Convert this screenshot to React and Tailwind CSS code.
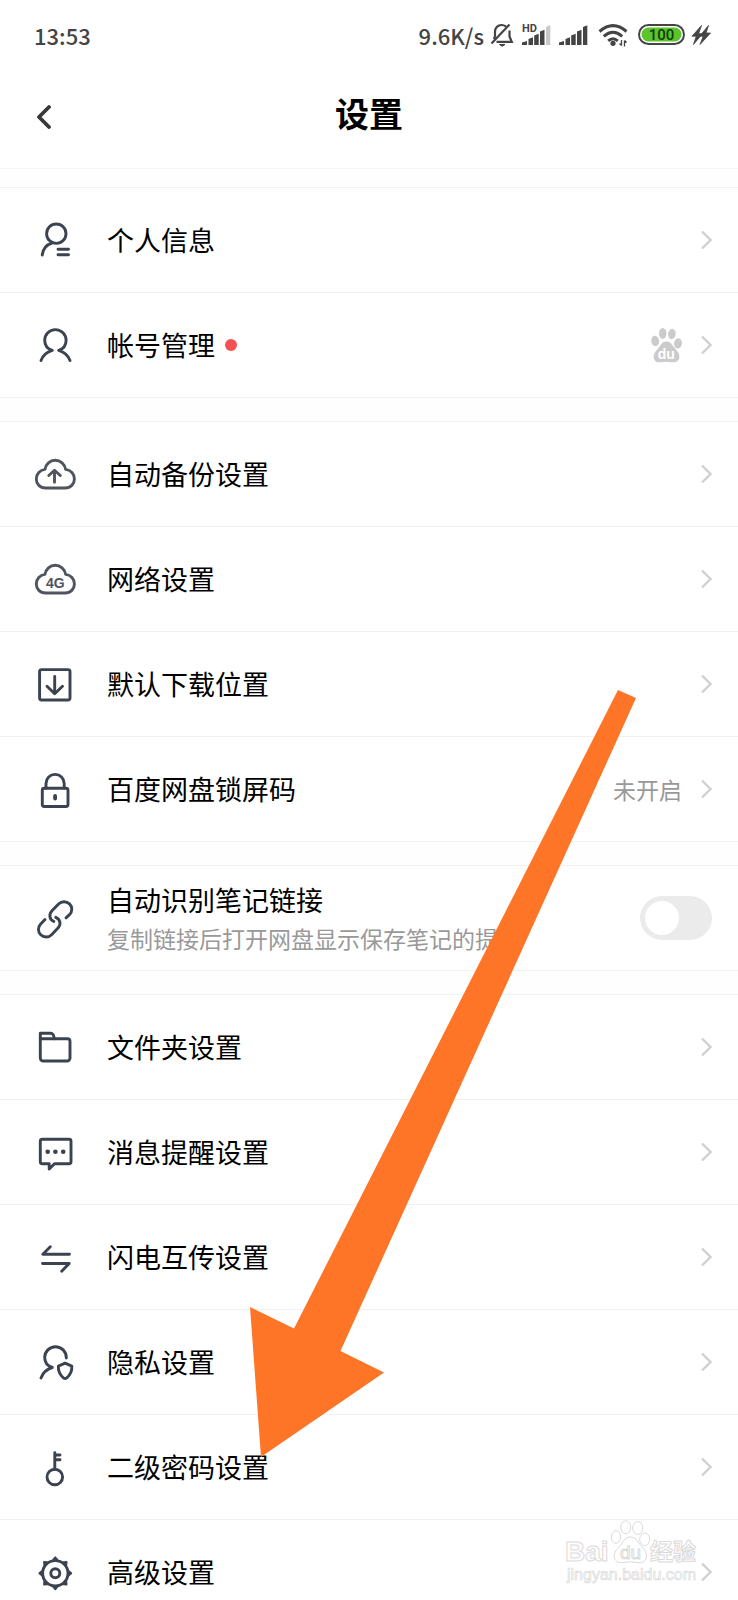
import React from "react";

const fontStack = "font-['Noto_Sans_CJK_SC','Noto_Sans',sans-serif]";

function Icon({ children, className = "text-[#3c4350]" }) {
  return (
    <svg
      viewBox="0 0 42 42"
      className={`size-[42px] shrink-0 ${className}`}
      fill="none"
      stroke="currentColor"
      strokeWidth="2.9"
      strokeLinecap="round"
      strokeLinejoin="round"
      aria-hidden="true"
    >
      {children}
    </svg>
  );
}

const cloud =
  "M11.5 35C6 35 2.3 31 2.3 26C2.3 21 6 17 11 16.4C11.8 11 16 7.3 21.2 7.3S30.8 11 31.6 16.4C36.8 17 40.4 21 40.4 26C40.4 31 36.6 35 31.2 35Z";

const icons = {
  profile: (
    <Icon>
      <circle cx="22.3" cy="14.7" r="9.7" />
      <path d="M18.3 23.8C12.5 25.6 8.8 30 8.2 36" />
      <path d="M24 30.3H34.5M24 35.7H34.5" />
    </Icon>
  ),
  account: (
    <Icon>
      <path d="M7 36.6C8.8 31.6 12.6 28 18.3 26.4C13.6 25 10.7 21 10.7 16.3a10.7 10.7 0 0 1 21.4 0C32.1 21 29.2 25 24.6 26.4C30.2 28 34.2 31.6 36 36.6" />
    </Icon>
  ),
  backup: (
    <Icon className="text-[#50545f]">
      <path d={cloud} />
      <path d="M20.5 29.3V17.5M14.8 22.5L20.5 17.2L26.3 22.5" />
    </Icon>
  ),
  network: (
    <Icon className="text-[#50545f]">
      <path d={cloud} />
      <text
        x="21.3"
        y="29.8"
        textAnchor="middle"
        fill="currentColor"
        stroke="none"
        className="font-['Liberation_Sans',sans-serif] text-[14px] font-bold"
      >
        4G
      </text>
    </Icon>
  ),
  download: (
    <Icon>
      <rect x="5.6" y="6.6" width="30.4" height="30.4" rx="2" />
      <path d="M20.7 13.5V30.5M13 23.3L20.7 30.8L28.5 23.3" />
    </Icon>
  ),
  lock: (
    <Icon>
      <rect x="8.3" y="20.3" width="25.7" height="18.2" rx="2" />
      <path d="M12 20V15.5a9.1 9.1 0 0 1 18.2 0V20" />
      <path d="M21.1 28V30.5" strokeWidth="3.8" />
    </Icon>
  ),
  link: (
    <Icon>
      <path d="M19.8 24.4c-4.5-1.9-5.2-7-1.8-10.6l6.6-6.8c3-3 7.8-3.1 10.9-.1s3 7.7 0 10.8L32 20.8" />
      <path d="M11 22.6L6.7 27c-3 3.1-3 7.9 0 10.8s7.9 3 10.9-.1l6.4-6.6c3.3-3.5 2.4-8.8-2.2-10.8" />
    </Icon>
  ),
  folder: (
    <Icon>
      <path d="M6.3 12.7V7.3H16.8C18.8 7.3 19.8 9 20.4 12.7" />
      <path d="M6.3 12.7H33.5a2.5 2.5 0 0 1 2.5 2.5V32a3 3 0 0 1-3 3H9.3a3 3 0 0 1-3-3Z" />
    </Icon>
  ),
  message: (
    <Icon>
      <path d="M8.3 8.3H35a2 2 0 0 1 2 2V30.7a2 2 0 0 1-2 2H20.5L15.2 38V32.7H8.3a2 2 0 0 1-2-2V10.3a2 2 0 0 1 2-2Z" />
      <g fill="currentColor" stroke="none">
        <circle cx="13.7" cy="20.7" r="2.3" />
        <circle cx="21.4" cy="20.7" r="2.3" />
        <circle cx="29.2" cy="20.7" r="2.3" />
      </g>
    </Icon>
  ),
  transfer: (
    <Icon>
      <path d="M35.5 18.3H8.8L16.3 10.7" />
      <path d="M8.5 27.5H35.2L27.7 35.2" />
    </Icon>
  ),
  privacy: (
    <Icon>
      <path d="M7 37C8.8 32 12.6 28.2 18.3 26.5C13.6 25 10.7 21 10.7 16.5a10.8 10.8 0 0 1 21.6 0v.6" />
      <path d="M31.1 22.2l6.7 2.9c.4 5.1-1.9 9.2-5.3 12q-1.4 1-2.8 0c-3.4-2.8-5.7-6.9-5.3-12Z" />
    </Icon>
  ),
  key: (
    <Icon>
      <circle cx="20.8" cy="31" r="7.8" />
      <path d="M20.8 23V6.8M20.8 9H26M20.8 13.7H26" />
    </Icon>
  ),
  gear: (
    <Icon>
      <circle cx="21.3" cy="22.3" r="12.7" />
      <circle cx="21.3" cy="22.3" r="4.5" />
      {[0, 45, 90, 135, 180, 225, 270, 315].map((a) => (
        <path
          key={a}
          d="M19.3 8.7L21.3 6.3L23.3 8.7Z"
          fill="currentColor"
          strokeWidth="1.8"
          transform={`rotate(${a} 21.3 22.3)`}
        />
      ))}
    </Icon>
  ),
};

function Chevron() {
  return (
    <svg viewBox="0 0 12 21" className="h-[21px] w-3 shrink-0" fill="none" stroke="#d0d0d0" strokeWidth="2.3" aria-hidden="true">
      <path d="M2 1.5L10.5 10L2 18.5" />
    </svg>
  );
}

function Paw() {
  return (
    <svg viewBox="0 0 32 36" className="h-9 w-8 shrink-0" fill="#cbcbcb" role="img" aria-label="du">
      <ellipse cx="5.2" cy="14" rx="3.9" ry="5.2" transform="rotate(-8 5.2 14)" />
      <ellipse cx="12.7" cy="6.4" rx="3.7" ry="5.4" />
      <ellipse cx="21.9" cy="7" rx="3.8" ry="5.2" transform="rotate(10 21.9 7)" />
      <ellipse cx="28" cy="16.4" rx="3.9" ry="5.2" transform="rotate(8 28 16.4)" />
      <path d="M16.3 14.5C21 14.5 22 18 25 21.5C28 25 29.7 27 29.3 30.5C28.7 34.5 25.5 35.5 22.5 35.2C18 34.5 14.5 34.5 10.5 35.2C7 35.5 4.2 34.5 3.7 30.5C3.3 27 5 25 8 21.5C11 18 12 14.5 16.3 14.5Z" />
      <text x="16.2" y="31.6" textAnchor="middle" fill="#fff" className="font-['Liberation_Sans',sans-serif] text-[14px] font-bold">
        du
      </text>
    </svg>
  );
}

function Row({ icon, label, dot, extra }) {
  return (
    <li className="border-t border-[#f1f1f1]">
      <a href="#" className="flex h-26 items-center pr-[26px] pl-[34px]">
        {icons[icon]}
        <span className="ml-[31px] text-[27px] leading-10 text-black">{label}</span>
        {dot && <span className="ml-[10px] size-3 rounded-full bg-[#f25252]" />}
        <span className="ml-auto flex items-center gap-[18px]">
          {extra}
          <Chevron />
        </span>
      </a>
    </li>
  );
}

function Section({ children }) {
  return <ul className="mb-[23px] border-b border-[#f1f1f1] bg-white">{children}</ul>;
}

function Bars({ last = "#444" }) {
  return (
    <>
      <path fill="#444" d="M0 22v-2.5l5-1.5v4zM6.5 22v-6l4.5-1.8v7.8zM12.2 22v-9.5l4.5-1.8v11.3zM18 22v-13.5l4.5-1.8v15.3z" />
      <path fill={last} d="M24 22v-18l4.3-1.8v19.8z" />
    </>
  );
}

function StatusBar() {
  return (
    <div className="flex h-[70px] items-center pr-[27px] pl-[34px] text-[22px] leading-8 font-medium text-[#444]">
      <time>13:53</time>
      <span className="ml-auto">9.6K/s</span>
      <svg viewBox="0 0 24 24" className="ml-[6px] size-6" fill="none" stroke="#444" strokeWidth="2.2" aria-hidden="true">
        <path d="M19.5 1.5L1.5 20.5" />
        <path d="M16.2 3.6C10.5-.2 5 3.5 5 9V13.5L3.8 16M19.5 7.5V13.5L21.8 18.9H6.5" />
        <path d="M9.5 21.5H15L12.2 23.3Z" fill="#444" strokeWidth="1" />
      </svg>
      <svg viewBox="0 0 29 24" className="ml-2 h-6 w-[29px] overflow-visible" aria-hidden="true">
        <Bars last="#c9c9c9" />
        <rect x="0" y="0" width="16" height="11" fill="#fff" />
        <text x="0" y="9" fill="#444" className="font-[Roboto,sans-serif] text-[11px] font-bold">
          HD
        </text>
      </svg>
      <svg viewBox="0 0 29 24" className="ml-2 h-6 w-[29px]" aria-hidden="true">
        <Bars />
      </svg>
      <svg viewBox="0 0 30 24" className="ml-[10px] h-6 w-[30px]" fill="none" stroke="#444" strokeWidth="3" aria-hidden="true">
        <path d="M1.5 8.5Q15-3.3 28.5 8.5M5.8 13.3Q15 5.2 24.2 13.3M10.2 17.8Q15 13.6 19.8 17.8" />
        <circle cx="15" cy="20.3" r="2.6" fill="#444" stroke="none" />
        <path d="M23.5 17V22.5M26.5 17.5V23.5M21.5 20.5L23.5 22.5M28.5 19.5L26.5 17.5" strokeWidth="1.3" />
      </svg>
      <svg viewBox="0 0 47 24" className="ml-[10px] h-6 w-[47px]" role="img" aria-label="100">
        <rect x="1" y="2" width="45" height="19" rx="9.5" fill="#fff" stroke="#444" strokeWidth="2" />
        <rect x="3.5" y="4.5" width="40" height="14" rx="7" fill="#5bc42c" />
        <text x="23.5" y="17" textAnchor="middle" fill="#143a08" className="font-[Roboto,sans-serif] text-[15px] font-medium">
          100
        </text>
      </svg>
      <svg viewBox="0 0 20 24" className="ml-[6px] h-6 w-5" fill="#444" stroke="#444" strokeWidth=".8" aria-hidden="true">
        <path d="M10.5 2.5L1 13.2H5.2L2.5 21.5L11.5 10.7H7.6Z" />
        <path d="M17.5 2.5L8.5 13.2H12.2L9 21.5L19.5 10H15Z" />
      </svg>
    </div>
  );
}

function Watermark() {
  return (
    <svg
      viewBox="0 0 140 66"
      className="pointer-events-none absolute right-[34px] bottom-4 h-[66px] w-[140px]"
      fill="#fff"
      stroke="#dadada"
      strokeWidth="1"
      aria-hidden="true"
    >
      <text x="1" y="43" className="font-['Liberation_Sans',sans-serif] text-[28px] font-bold">Bai</text>
      <ellipse cx="52" cy="19" rx="4.7" ry="6.3" />
      <ellipse cx="61.7" cy="9.3" rx="5" ry="6.5" />
      <ellipse cx="73.7" cy="10" rx="5" ry="6.5" />
      <ellipse cx="80.7" cy="21.3" rx="5" ry="6.3" />
      <path d="M66.5 19C73 19 74 25 78 29C82 33 83 36 82.5 39C81.5 45 76 45 73 44.5C68 43.7 65 43.7 60 44.5C56 45 51 44.5 50.3 39C50 36 51 33 55 29C59 25 60 19 66.5 19Z" />
      <text x="66.5" y="41" textAnchor="middle" className="font-['Liberation_Sans',sans-serif] text-[19px]">du</text>
      <text x="86" y="42" className="text-[23px] font-bold">经验</text>
      <text x="3" y="62" strokeWidth=".7" className="font-['Liberation_Sans',sans-serif] text-[16px]">jingyan.baidu.com</text>
    </svg>
  );
}

export default function App() {
  return (
    <div className={`relative h-screen overflow-hidden bg-[#fefefe] ${fontStack}`} lang="zh-CN">
      <header className="mb-[18px] border-b border-[#f6f6f6] bg-white">
        <StatusBar />
        <div className="grid h-[98px] grid-cols-[1fr_auto_1fr] items-center px-8 pb-3">
          <button type="button" aria-label="返回" className="justify-self-start">
            <svg viewBox="0 0 24 32" className="h-8 w-6" fill="none" stroke="#383838" strokeWidth="3.8" strokeLinecap="round" strokeLinejoin="round" aria-hidden="true">
              <path d="M17 10L7 20L17 30" />
            </svg>
          </button>
          <h1 className="text-[34px] leading-12 font-bold text-black">设置</h1>
        </div>
      </header>

      <main>
        <Section>
          <Row icon="profile" label="个人信息" />
          <Row icon="account" label="帐号管理" dot extra={<Paw />} />
        </Section>
        <Section>
          <Row icon="backup" label="自动备份设置" />
          <Row icon="network" label="网络设置" />
          <Row icon="download" label="默认下载位置" />
          <Row
            icon="lock"
            label="百度网盘锁屏码"
            extra={<span className="text-[23px] leading-9 text-[#999]">未开启</span>}
          />
        </Section>
        <Section>
          <li className="border-t border-[#f1f1f1]">
            <label className="flex h-26 items-center pr-[26px] pl-[34px]">
              {icons.link}
              <span className="ml-[31px] flex flex-col">
                <span className="text-[27px] leading-10 text-black">自动识别笔记链接</span>
                <span className="text-[23px] leading-9 text-[#999]">复制链接后打开网盘显示保存笔记的提示</span>
              </span>
              <input type="checkbox" className="peer sr-only" />
              <span className="ml-auto flex h-11 w-[72px] shrink-0 items-center rounded-full bg-[#ebebeb] px-[5px] peer-checked:justify-end peer-checked:bg-[#3b8cff]">
                <span className="size-[34px] rounded-full bg-white" />
              </span>
            </label>
          </li>
        </Section>
        <Section>
          <Row icon="folder" label="文件夹设置" />
          <Row icon="message" label="消息提醒设置" />
          <Row icon="transfer" label="闪电互传设置" />
          <Row icon="privacy" label="隐私设置" />
          <Row icon="key" label="二级密码设置" />
          <Row icon="gear" label="高级设置" />
        </Section>
      </main>

      <svg
        viewBox="0 0 386 767"
        className="pointer-events-none absolute top-[690px] left-[250px] h-[767px] w-[386px]"
        fill="#ff7527"
        aria-hidden="true"
      >
        <path d="M368 0L386 8L90.5 661L134 682.5L11 767L0 617L44 638.5Z" />
      </svg>
      <Watermark />
    </div>
  );
}
